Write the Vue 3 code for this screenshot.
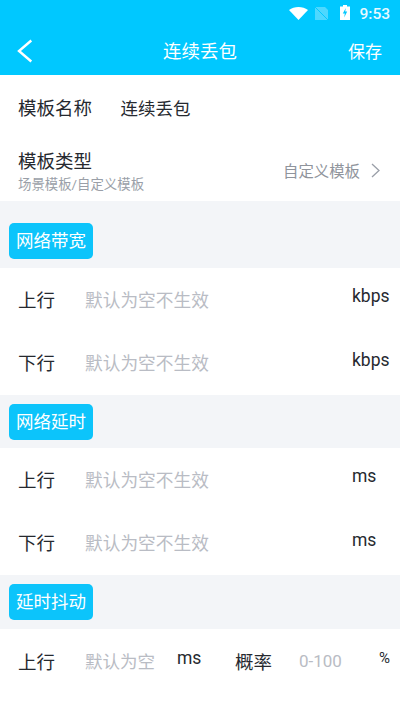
<script setup>
const sections = [
  { title: '网络带宽', unit: 'kbps', cls: 'first' },
  { title: '网络延时', unit: 'ms', cls: 'second' },
]
const rows = ['上行', '下行']
</script>

<template>
  <div class="page">
    <div class="status">
      <svg class="wifi" width="19" height="13" viewBox="0 0 19 13"><path d="M0 3 C5.2 -1 13.8 -1 19 3 L9.5 13 Z" fill="#fff"/></svg>
      <svg class="sim" width="13" height="13" viewBox="0 0 13 13"><path d="M0 0 H10 L13 3 V13 H0 Z" fill="#fff" fill-opacity=".3"/><path d="M0 0 L13 13" stroke="#00c8ff" stroke-width="1"/></svg>
      <svg class="batt" width="10" height="15" viewBox="0 0 10 15"><path d="M3 0 H7 V1.5 H10 V15 H0 V1.5 H3 Z" fill="#fff"/><path d="M5.8 3 L2.8 8.6 H4.8 L4.2 12.4 L7.2 6.6 H5.2 Z" fill="#00c8ff"/></svg>
      <span class="time">9:53</span>
    </div>
    <header class="nav">
      <svg class="back" width="16" height="24" viewBox="0 0 16 24"><path d="M14.3 1.5 L2 12 L14.3 22.5" fill="none" stroke="#fff" stroke-width="2.4"/></svg>
      <span class="nav-title">连续丢包</span>
      <span class="save">保存</span>
    </header>

    <div class="name-row">
      <span class="label">模板名称</span>
      <span class="name-value">连续丢包</span>
    </div>
    <div class="type-row">
      <div class="type-left">
        <span class="label">模板类型</span>
        <span class="hint">场景模板/自定义模板</span>
      </div>
      <div class="type-right">
        <span class="type-value">自定义模板</span>
        <svg width="9" height="15" viewBox="0 0 9 15"><path d="M1 1 L8 7.5 L1 14" fill="none" stroke="#9a9fa8" stroke-width="1.3"/></svg>
      </div>
    </div>

    <template v-for="s in sections" :key="s.title">
      <div class="band" :class="s.cls"><span class="tag">{{ s.title }}</span></div>
      <div class="group">
        <div v-for="r in rows" :key="r" class="row">
          <span class="row-label">{{ r }}</span>
          <span class="placeholder">默认为空不生效</span>
          <span class="unit">{{ s.unit }}</span>
        </div>
      </div>
    </template>

    <div class="band third"><span class="tag">延时抖动</span></div>
    <div class="last-row">
      <span class="row-label">上行</span>
      <span class="placeholder short">默认为空</span>
      <span class="unit ms">ms</span>
      <span class="row-label rate">概率</span>
      <span class="placeholder range">0-100</span>
      <span class="unit pct">%</span>
    </div>
  </div>
</template>

<style scoped>
.page {
  width: 400px;
  height: 710px;
  overflow: hidden;
  background: #fff;
  font-family: "Roboto", "Noto Sans CJK SC", sans-serif;
  color: #26292f;
}
.status {
  height: 25px;
  background: #00c8ff;
  display: flex;
  align-items: center;
  justify-content: flex-end;
  padding: 2px 10px 0 0;
  box-sizing: border-box;
}
.wifi { margin-right: 7px; }
.sim { margin-right: 12px; }
.batt { margin-right: 9px; margin-top: -2px; }
.time { color: #e6f9ff; font-size: 15.5px; font-weight: 500; }
.nav {
  height: 50px;
  background: #00c8ff;
  display: flex;
  align-items: center;
  position: relative;
  padding: 0 18px 0 17px;
  color: #fff;
}
.back { margin-top: 2px; }
.nav-title {
  position: absolute;
  left: 0;
  right: 0;
  text-align: center;
  font-size: 18.5px;
}
.save { margin-left: auto; font-size: 17px; }
.name-row {
  height: 62px;
  display: flex;
  align-items: center;
  padding: 5px 18px 0;
  box-sizing: border-box;
}
.label { font-size: 18.5px; line-height: 24px; }
.name-value { font-size: 17.5px; margin: -2px 0 0 28.5px; }
.type-row {
  height: 64px;
  display: flex;
  justify-content: space-between;
  padding: 13px 20px 0 18px;
  box-sizing: border-box;
}
.type-left { display: flex; flex-direction: column; }
.hint { font-size: 13.4px; color: #9a9fa8; line-height: 18px; margin-top: 2px; }
.type-right { display: flex; align-items: center; gap: 11px; padding-top: 4px; height: 32px; }
.type-value { font-size: 15.4px; color: #8f949c; }
.band {
  background: #f3f5f8;
  box-sizing: border-box;
  padding-left: 9px;
}
.band.first { height: 67px; padding-top: 22px; }
.band.second { height: 53px; padding-top: 9px; }
.band.third { height: 54px; padding-top: 9px; }
.tag {
  display: block;
  width: 84px;
  height: 36px;
  line-height: 36px;
  text-align: center;
  border-radius: 5px;
  background: #0cc4fb;
  color: #fff;
  font-size: 17.5px;
}
.group { display: flex; flex-direction: column; }
.row {
  height: 63.5px;
  box-sizing: border-box;
  display: flex;
  align-items: center;
  padding: 0 0 2px 18px;
}
.row-label { font-size: 18.5px; width: 67px; flex: none; }
.placeholder { font-size: 17.7px; color: #b9bcc4; }
.unit { font-size: 17.5px; margin-left: auto; margin-right: 9px; margin-top: -5px; width: 39px; }
.last-row {
  height: 65px;
  box-sizing: border-box;
  display: flex;
  align-items: center;
  padding: 0 0 2px 18px;
}
.short { font-size: 17.5px; }
.unit.ms { margin: -5px 0 0 22px; width: 58px; }
.rate { width: 64px; }
.range { font-size: 17px; }
.unit.pct { margin: -5px 0 0 37px; width: auto; font-size: 15px; }
</style>
